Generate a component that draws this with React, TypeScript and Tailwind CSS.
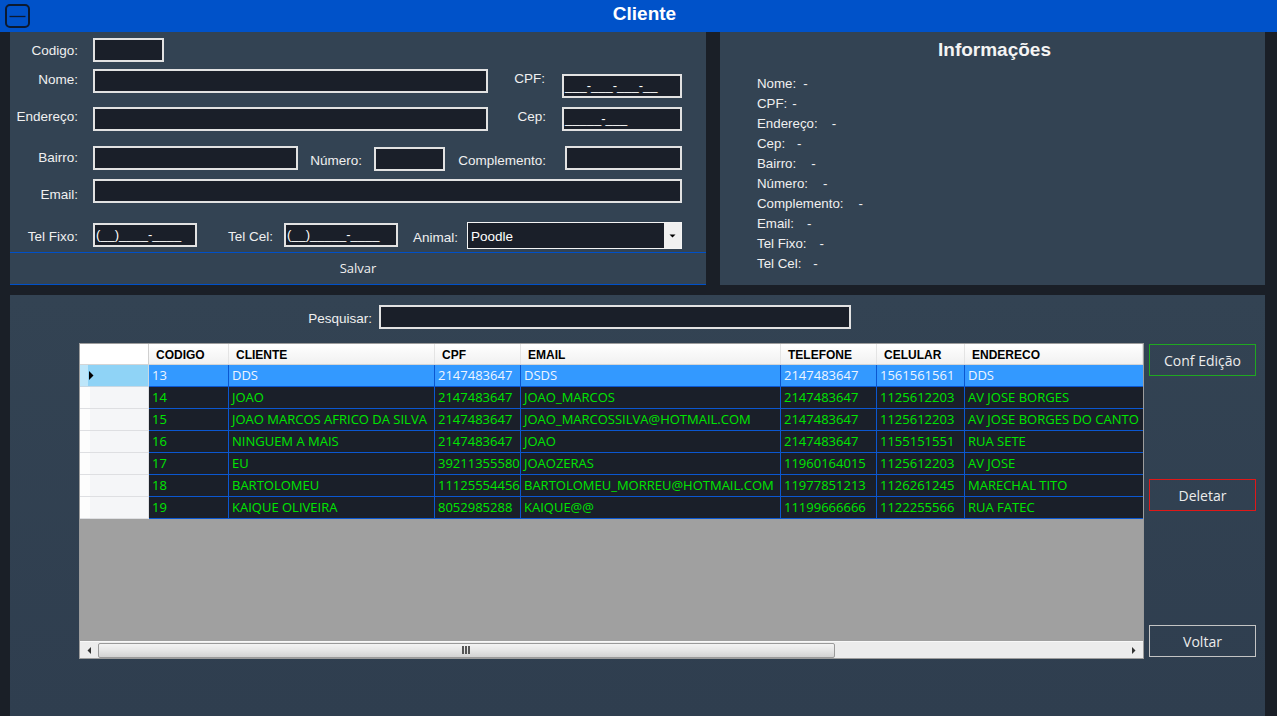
import React from "react";

const SANS = "font-['Liberation_Sans',Arial,sans-serif]";
const SEGOE = "font-['Open_Sans','Noto_Sans',sans-serif]";

function Lbl({ cls, children }: { cls: string; children: React.ReactNode }) {
  return (
    <div
      className={`shrink-0 text-right text-[13.5px] leading-[16px] pt-[1px] text-[#f0f0f0] whitespace-nowrap ${SANS} ${cls}`}
    >
      {children}
    </div>
  );
}

function Box({ cls, children }: { cls: string; children?: React.ReactNode }) {
  return (
    <div
      className={`shrink-0 h-[24px] bg-[#1a1f29] border-2 border-[#e2e2e2] pl-[1px] text-[13px] leading-[20px] text-white whitespace-nowrap overflow-hidden ${SANS} ${cls}`}
    >
      {children}
    </div>
  );
}

const cols: { name: string; w: string }[] = [
  { name: "CODIGO", w: "w-[80px]" },
  { name: "CLIENTE", w: "w-[206px]" },
  { name: "CPF", w: "w-[86px]" },
  { name: "EMAIL", w: "w-[260px]" },
  { name: "TELEFONE", w: "w-[96px]" },
  { name: "CELULAR", w: "w-[88px]" },
  { name: "ENDERECO", w: "w-[178px]" },
];

const rows: string[][] = [
  ["13", "DDS", "2147483647", "DSDS", "2147483647", "1561561561", "DDS"],
  ["14", "JOAO", "2147483647", "JOAO_MARCOS", "2147483647", "1125612203", "AV JOSE BORGES"],
  [
    "15",
    "JOAO MARCOS AFRICO DA SILVA",
    "2147483647",
    "JOAO_MARCOSSILVA@HOTMAIL.COM",
    "2147483647",
    "1125612203",
    "AV JOSE BORGES DO CANTO",
  ],
  ["16", "NINGUEM A MAIS", "2147483647", "JOAO", "2147483647", "1155151551", "RUA SETE"],
  ["17", "EU", "39211355580", "JOAOZERAS", "11960164015", "1125612203", "AV JOSE"],
  [
    "18",
    "BARTOLOMEU",
    "11125554456",
    "BARTOLOMEU_MORREU@HOTMAIL.COM",
    "11977851213",
    "1126261245",
    "MARECHAL TITO",
  ],
  ["19", "KAIQUE OLIVEIRA", "8052985288", "KAIQUE@@", "11199666666", "1122255566", "RUA FATEC"],
];

const info: { label: string; ml: string }[] = [
  { label: "Nome:", ml: "ml-[7px]" },
  { label: "CPF:", ml: "ml-[5px]" },
  { label: "Endereço:", ml: "ml-[14px]" },
  { label: "Cep:", ml: "ml-[12px]" },
  { label: "Bairro:", ml: "ml-[15px]" },
  { label: "Número:", ml: "ml-[15px]" },
  { label: "Complemento:", ml: "ml-[15px]" },
  { label: "Email:", ml: "ml-[13px]" },
  { label: "Tel Fixo:", ml: "ml-[13px]" },
  { label: "Tel Cel:", ml: "ml-[12px]" },
];

function FormPanel() {
  return (
    <div className="w-[696px] h-[253px] bg-[#334353] flex flex-col pt-[6px] shrink-0">
      <div className="flex h-[24px]">
        <Lbl cls="w-[68px] mt-[4px]">Codigo:</Lbl>
        <Box cls="ml-[15px] w-[71px]" />
      </div>
      <div className="flex h-[40px] items-start">
        <Lbl cls="w-[68px] mt-[9px]">Nome:</Lbl>
        <Box cls="ml-[15px] w-[395px] mt-[7px]" />
        <Lbl cls="w-[57px] mt-[8px]">CPF:</Lbl>
        <Box cls="ml-[17px] w-[120px] mt-[12px]">___-___-___-__</Box>
      </div>
      <div className="flex h-[40px] items-start">
        <Lbl cls="w-[68px] mt-[6px]">Endereço:</Lbl>
        <Box cls="ml-[15px] w-[395px] mt-[5px]" />
        <Lbl cls="w-[58px] mt-[6px]">Cep:</Lbl>
        <Box cls="ml-[16px] w-[120px] mt-[5px]">_____-___</Box>
      </div>
      <div className="flex h-[33px] items-start">
        <Lbl cls="w-[68px] mt-[7px]">Bairro:</Lbl>
        <Box cls="ml-[15px] w-[205px] mt-[4px]" />
        <Lbl cls="w-[64px] mt-[10px]">Número:</Lbl>
        <Box cls="ml-[12px] w-[71px] mt-[5px]" />
        <Lbl cls="w-[101px] mt-[10px]">Complemento:</Lbl>
        <Box cls="ml-[19px] w-[117px] mt-[4px]" />
      </div>
      <div className="flex h-[40px] items-start">
        <Lbl cls="w-[68px] mt-[11px]">Email:</Lbl>
        <Box cls="ml-[15px] w-[589px] mt-[4px]" />
      </div>
      <div className="flex h-[37px] items-start">
        <Lbl cls="w-[68px] mt-[13px]">Tel Fixo:</Lbl>
        <Box cls="ml-[15px] w-[104px] mt-[8px]">(__)____-____</Box>
        <Lbl cls="w-[76px] mt-[13px]">Tel Cel:</Lbl>
        <Box cls="ml-[11px] w-[114px] mt-[8px]">(__)_____-____</Box>
        <Lbl cls="w-[60px] mt-[14px]">Animal:</Lbl>
        <div className="ml-[9px] mt-[7px] w-[215px] h-[27px] flex border border-[#f4f4f4] bg-[#1a1f29] shrink-0">
          <div
            className={`flex-1 pl-[3px] pt-[1px] text-[13.5px] leading-[25px] text-white ${SANS}`}
          >
            Poodle
          </div>
          <div className="w-[17px] h-full bg-[#f0f0f0] flex items-center justify-center">
            <svg width="7" height="4" viewBox="0 0 7 4">
              <path d="M0.5 0.5 H6.5 L3.5 3.5 Z" fill="#000" />
            </svg>
          </div>
        </div>
      </div>
      <div
        className={`h-[33px] border-y border-[#0050c8] flex items-center justify-center pt-[1px] text-[13px] text-[#f0f0f0] ${SEGOE}`}
      >
        Salvar
      </div>
    </div>
  );
}

function InfoPanel() {
  return (
    <div className="flex-1 h-[253px] bg-[#334353] flex flex-col">
      <div
        className={`mt-[7px] pl-[4px] text-center text-[19px] leading-[22px] font-bold text-[#f4f4f4] ${SANS}`}
      >
        Informações
      </div>
      <div className={`mt-[13px] pl-[37px] flex flex-col text-[13.3px] leading-[20px] text-[#f0f0f0] ${SANS}`}>
        {info.map((r) => (
          <div key={r.label} className="flex">
            <span>{r.label}</span>
            <span className={r.ml}>-</span>
          </div>
        ))}
      </div>
    </div>
  );
}

function Grid() {
  return (
    <div className="w-[1065px] h-[316px] border border-[#9c9c9c] bg-[#a0a0a0] flex flex-col shrink-0">
      <div className="flex h-[21px] shrink-0 bg-gradient-to-b from-[#ffffff] to-[#f1f1f1] border-b border-[#d5d5d5]">
        <div className="w-[69px] h-full border-r border-[#d0d0d0] bg-white" />
        {cols.map((c) => (
          <div
            key={c.name}
            className={`${c.w} h-full border-r border-[#e4e4e4] pl-[7px] pt-[1px] flex items-center text-[12px] font-bold text-black whitespace-nowrap overflow-hidden ${SANS}`}
          >
            {c.name}
          </div>
        ))}
      </div>
      {rows.map((r, i) => {
        const sel = i === 0;
        return (
          <div key={i} className="flex h-[22px] shrink-0">
            {sel ? (
              <div className="w-[69px] h-full flex border-r border-b border-[#c8d8e4] bg-[#8fd3f6]">
                <div className="w-[8px] h-full bg-[#bde6fa]" />
                <div className="pl-[1px] flex items-center">
                  <svg width="5" height="9" viewBox="0 0 5 9">
                    <path d="M0 0 L4.5 4.5 L0 9 Z" fill="#000" />
                  </svg>
                </div>
              </div>
            ) : (
              <div className="w-[69px] h-full flex border-r border-b border-[#dedfe2] bg-[#f5f6f8]">
                <div className="w-[10px] h-full bg-[#fdfdfd]" />
              </div>
            )}
            {r.map((v, j) => (
              <div
                key={j}
                className={`${cols[j].w} h-full border-b ${j < 6 ? "border-r" : ""} border-[#0b57d0] pl-[3px] flex items-center whitespace-nowrap overflow-hidden text-[13px] ${SEGOE} ${
                  sel ? "bg-[#3399ff] text-[#eef5ff]" : "bg-[#1a1f29] text-[#00e600]"
                }`}
              >
                {v}
              </div>
            ))}
          </div>
        );
      })}
      <div className="flex-1" />
      <div className="h-[17px] shrink-0 bg-[#ececec] border-t border-[#f8f8f8] flex items-center">
        <div className="w-[18px] h-full flex items-center justify-center">
          <svg width="4" height="7" viewBox="0 0 4 7">
            <path d="M4 0 L0.5 3.5 L4 7 Z" fill="#333" />
          </svg>
        </div>
        <div className="w-[737px] h-[15px] rounded-[2px] border border-[#9a9a9a] bg-gradient-to-b from-[#f3f3f3] via-[#e6e6e6] to-[#d3d3d3] flex items-center justify-center">
          <svg width="9" height="8" viewBox="0 0 9 8">
            <rect x="0" y="0" width="2" height="8" fill="#555" />
            <rect x="3" y="0" width="2" height="8" fill="#555" />
            <rect x="6" y="0" width="2" height="8" fill="#555" />
          </svg>
        </div>
        <div className="flex-1" />
        <div className="w-[18px] h-full flex items-center justify-center">
          <svg width="4" height="7" viewBox="0 0 4 7">
            <path d="M0 0 L3.5 3.5 L0 7 Z" fill="#333" />
          </svg>
        </div>
      </div>
    </div>
  );
}

function Btn({ cls, children }: { cls: string; children: React.ReactNode }) {
  return (
    <div
      className={`h-[32px] border flex items-center justify-center text-[14px] text-[#ececec] ${SEGOE} ${cls}`}
    >
      {children}
    </div>
  );
}

export default function App() {
  return (
    <div className="w-[1277px] h-[716px] bg-[#1a1f27] flex flex-col overflow-hidden">
      <div className="h-[32px] bg-[#0052c9] flex items-center relative shrink-0">
        <div className="absolute left-[5px] top-[4px]">
          <svg width="25" height="24" viewBox="0 0 25 24">
            <rect x="1" y="1" width="23" height="22" rx="4" fill="none" stroke="#0c1a30" strokeWidth="2" />
            <line x1="4.5" y1="12.5" x2="20.5" y2="12.5" stroke="#0c1a30" strokeWidth="1.3" />
          </svg>
        </div>
        <div
          className={`w-full text-center pl-[12px] pb-[3px] text-[19px] font-bold text-white ${SANS}`}
        >
          Cliente
        </div>
      </div>
      <div className="flex pl-[10px] h-[253px] shrink-0">
        <FormPanel />
        <div className="w-[14px] shrink-0" />
        <InfoPanel />
        <div className="w-[12px] shrink-0" />
      </div>
      <div className="ml-[10px] mt-[10px] w-[1255px] flex-1 bg-gradient-to-b from-[#334353] to-[#2f3e4f] flex flex-col">
        <div className="flex h-[24px] mt-[10px]">
          <Lbl cls="w-[362px] mt-[5px]">Pesquisar:</Lbl>
          <Box cls="ml-[7px] w-[472px]" />
        </div>
        <div className="flex mt-[14px]">
          <div className="ml-[69px]">
            <Grid />
          </div>
          <div className="ml-[5px] w-[107px] flex flex-col">
            <Btn cls="mt-[1px] border-[#20a820]">Conf Edição</Btn>
            <Btn cls="mt-[103px] border-[#e01818]">Deletar</Btn>
            <Btn cls="mt-[114px] border-[#c4c4c4]">Voltar</Btn>
          </div>
        </div>
      </div>
    </div>
  );
}
